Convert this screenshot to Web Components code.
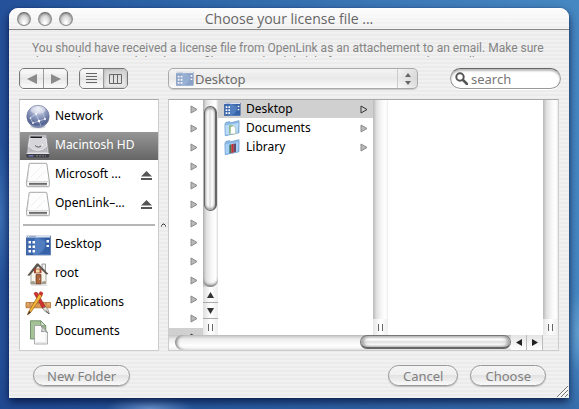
<!DOCTYPE html>
<html lang="en">
<head>
<meta charset="utf-8">
<title>Choose your license file ...</title>
<style>
html { height: 100%; }
body {
  margin: 0; min-height: 100%; display: flex; flex-direction: column; box-sizing: border-box;
  padding: 8px 10px 12px 9px; overflow: hidden;
  font: 12px/16px "Noto Sans", "Open Sans", sans-serif; color: #000;
  background:
    radial-gradient(ellipse 44px 14px at 150px 100%, rgba(120,160,215,.8), transparent),
    radial-gradient(ellipse 14px 70px at 0 215px, rgba(70,125,190,.7), transparent),
    radial-gradient(ellipse 14px 40px at 100% 332px, rgba(110,170,215,.7), transparent),
    linear-gradient(transparent 85%, rgba(25,60,130,.35)),
    linear-gradient(90deg, #24519a 0%, #2d65a8 30%, #3a74b4 60%, #4688c2 100%);
}
</style>
</head>
<body>
<mac-window heading="Choose your license file ...">
  <p slot="message">You should have received a license file from OpenLink as an attachement to an email. Make sure that you have saved this license file to your hard disk before you continue the installation.</p>
  <mac-toolbar slot="toolbar"></mac-toolbar>
  <mac-sidebar slot="main">
    <sidebar-item icon="network">Network</sidebar-item>
    <sidebar-item icon="drive" selected>Macintosh HD</sidebar-item>
    <sidebar-item icon="volume" eject>Microsoft ...</sidebar-item>
    <sidebar-item icon="volume" eject>OpenLink–...</sidebar-item>
    <hr>
    <sidebar-item icon="desktop">Desktop</sidebar-item>
    <sidebar-item icon="home">root</sidebar-item>
    <sidebar-item icon="apps">Applications</sidebar-item>
    <sidebar-item icon="docs">Documents</sidebar-item>
  </mac-sidebar>
  <mac-splitter slot="main"></mac-splitter>
  <column-browser slot="main">
    <browser-row icon="desktop" selected>Desktop</browser-row>
    <browser-row icon="folderdoc">Documents</browser-row>
    <browser-row icon="folderlib">Library</browser-row>
  </column-browser>
  <mac-button slot="start" wide>New Folder</mac-button>
  <mac-button slot="end">Cancel</mac-button>
  <mac-button slot="end">Choose</mac-button>
</mac-window>

<script>
const define = (name, html, setup) => {
  const template = document.createElement('template');
  template.innerHTML = html;
  customElements.define(name, class extends HTMLElement {
    constructor() {
      super();
      this.attachShadow({ mode: 'open' }).append(template.content.cloneNode(true));
    }
    connectedCallback() { if (setup) setup(this, this.shadowRoot); }
  });
};

const ICONS = {
  network: `<svg viewBox="0 0 24 24"><defs><radialGradient id="g" cx=".5" cy=".15" r=".9"><stop offset="0" stop-color="#e4e9f5"/><stop offset=".45" stop-color="#8c99bd"/><stop offset=".8" stop-color="#53618f"/><stop offset="1" stop-color="#a9b8dc"/></radialGradient></defs><ellipse cx="12" cy="22" rx="8" ry="1.6" fill="#ddd"/><circle cx="12" cy="11.5" r="11.2" fill="url(#g)" stroke="#6b7698" stroke-width=".6"/><path d="M4 13l6-4 5-5M10 9l3 7 6-2M13 16l-6 2M15 4l4 10M13 16l2 5M4 13l3 5" fill="none" stroke="#d5e0f8" stroke-width=".7" opacity=".8"/><g fill="#fff"><circle cx="10" cy="9" r="1"/><circle cx="13" cy="16" r="1.2"/><circle cx="19" cy="14" r="1"/><circle cx="7" cy="18" r=".9"/><circle cx="4.500" cy="13" r=".8"/></g><ellipse cx="12" cy="5" rx="7.500" ry="3.800" fill="#fff" opacity=".42"/></svg>`,
  drive: `<svg viewBox="0 0 24 24"><path d="M3 .8h17.500L23 20H.8z" fill="#cfcfd4" stroke="#8a8a8e" stroke-width=".8"/><path d="M4 1.500h15.500L21.500 18H2.500z" fill="#b9b9bf"/><path d="M3.500 5Q12 .5 20 5l1 7q-9 9-18.500 0z" fill="#d5d5da" stroke="#f1f1f1" stroke-width=".7"/><path d="M4.500 2.500h11.500v1.500H4.500z" fill="#1b1b1f"/><path d="M9 11.500q3.500 3.200 6.500 0" fill="none" stroke="#555"/><path d="M15.500 12l1.500-2" stroke="#fff"/><path d="M.5 20h22.700v2.500q0 1-1.500 1H2q-1.500 0-1.500-1z" fill="#3c3c46"/><path d="M.7 19.500h22.400" stroke="#eee" stroke-width=".8"/><path d="M2.500 21.800h5" stroke="#7b82c4" stroke-width="1.300"/><path d="M10 21.800h10" stroke="#8a8a8a" stroke-dasharray="2 1"/></svg>`,
  volume: `<svg viewBox="0 0 24 24"><path d="M3.200.8q.2-.5.800-.5h16q.6 0 .8.500L23.300 18v5q0 .7-.8.700h-21q-.8 0-.8-.7v-5z" fill="#fdfdfd" stroke="#9b9b9b" stroke-width=".9"/><path d="M1 18.500h22M3 1.500L1.500 18" stroke="#ccc" stroke-width=".7"/><path d="M5 14l12-12M10 17l9-9" stroke="#f0f0f0"/><rect x="3" y="20" width="18" height="2.300" fill="#858585"/><path d="M3 20.300h18" stroke="#555" stroke-width=".7"/></svg>`,
  desktop: `<svg viewBox="0 0 24 24"><rect x=".3" y="3" width="24" height="19" fill="#3d68ad" stroke="#2b4e8c" stroke-width=".6"/><path d="M9 3L7 22h17L20 9z" fill="#5b87c6" opacity=".7"/><path d="M12 21q9-3 7-17h5v17z" fill="#2f5ba2" opacity=".8"/><rect x="0" y="2.300" width="24" height="2.200" fill="#dfe5ef"/><path d="M1 3.400h1M3 3.400h7" stroke="#8796b3" stroke-width=".8"/><g fill="#fff"><path d="M2.500 8h2.500v2.500H2.500zM6.500 8H9v2.500H6.500zM2.500 12.500h2.500V15H2.500zM6.500 12.500H9V15H6.500zM2.500 17h2.500v2.500H2.500zM6.500 17H9v2.500H6.500zM20.500 7H23v2.500h-2.500zM20.500 12H23v2h-2.500z"/></g></svg>`,
  home: `<svg viewBox="0 0 24 24"><path d="M5 22.500h15l2 1H5z" fill="#ccc"/><path d="M16 2h3.500v7L16 6z" fill="#eee" stroke="#777" stroke-width=".7"/><path d="M5 10l6.500-8L20 11v10.500L5 22z" fill="#f8f5ec" stroke="#777" stroke-width=".6"/><path d="M1.300 13.500L10.500 1.800q1-1 2 0L22.500 12l-2.200.4L12 4.200 3.500 13.800z" fill="#5d564d"/><path d="M10 12.500h5v9.300h-5z" fill="#ac653a" stroke="#66371f" stroke-width=".7"/><path d="M9.500 7h4.500v4H9.500z" fill="#f4dca6" stroke="#8a2515" stroke-width=".7"/><path d="M8.700 6.700v4.600M14.800 6.700v4.600" stroke="#a3301e" stroke-width="1.200"/><path d="M4.500 20q2.500-2 4.500 0v2H4.500zM16 20q2-2 4 0v2h-4z" fill="#a39e90"/><circle cx="13.700" cy="17" r=".6" fill="#fff"/></svg>`,
  apps: `<svg viewBox="0 0 24 24"><path d="M0 11.500h24.500v5.300H0z" fill="#d99a57" stroke="#a76427" stroke-width=".7"/><path d="M1 13h23" stroke="#f1c084"/><path d="M4 11.700v2m4-2v2m4-2v2m4-2v2m4-2v2" stroke="#7d4a1c" stroke-width=".7"/><path d="M8 2.500q1-2.200 3.300-.8L19.500 16l-2.800 1.600z" fill="#cf3430" stroke="#8c1b1b" stroke-width=".6"/><path d="M16.700 17.300l2.900-1.600q3 2.500 3.700 7-4.800-1.500-6.600-5.400z" fill="#e4e0d8" stroke="#777" stroke-width=".7"/><path d="M20 19.500l3 3.500" stroke="#555"/><path d="M13.500 2.500L3 20l-1.600 3.800L4.500 21.700 16.200 4.500z" fill="#f6b83b" stroke="#9a5a13" stroke-width=".7"/><path d="M12.500 2.800L14 .6q2.500-.3 3.200 2L15.800 5z" fill="#c9332d"/><path d="M1.300 24l2-4 1.600 1.200z" fill="#333"/></svg>`,
  docs: `<svg viewBox="0 0 24 24"><path d="M4.500.8h10.300l5 5V19H4.500z" fill="#a3c397" stroke="#5f7d58" stroke-width=".8"/><path d="M14.800.8l5 5h-5z" fill="#d9e8d1" stroke="#5f7d58" stroke-width=".7"/><path d="M8.500 5.500h6.800l6.200 7V24h-13z" fill="#fbfbfb" stroke="#999" stroke-width=".8"/><path d="M15.300 5.500l6.200 7q-3.500-2-6-.8 1.500-3-.2-6.200z" fill="#ddd" stroke="#777" stroke-width=".7"/><path d="M10 22.500h10V14" stroke="#e5e5e5" fill="none"/></svg>`,
  folderdoc: `<svg viewBox="0 0 24 24"><path d="M1.500 6L3 3.500l6-1L10.500 4 22.500 1v18L2 23.500z" fill="#8bbbe8" stroke="#6293c5"/><path d="M1.500 7.500L20.500 4l2 .3L21 19.500 2 23z" fill="#b9dafa" stroke="#78a8d6" stroke-width=".8"/><path d="M8.500 8.500h6l3 3.500v9H8.500z" fill="#fff" stroke="#9ab596"/><path d="M9 20V9h4" fill="none" stroke="#76ab65" stroke-width="1.700"/></svg>`,
  folderlib: `<svg viewBox="0 0 24 24"><path d="M1.500 6L3 3.500l6-1L10.500 4 22.500 1v18L2 23.500z" fill="#8bbbe8" stroke="#6293c5"/><path d="M1.500 7.500L20.500 4l2 .3L21 19.500 2 23z" fill="#a6cff7" stroke="#78a8d6" stroke-width=".8"/><path d="M8 8.500l3-.5v13l-3 .5z" fill="#3e7a59"/><path d="M11 8l3.500-.7v13L11 21z" fill="#d02c2c"/><path d="M14.500 7.300L18 6.600V19l-3.500 1.300z" fill="#634a68"/></svg>`
};

define('mac-icon', `<style>
:host { display: block; flex: none; width: var(--icon, 24px); height: var(--icon, 24px); }
svg { display: block; width: 100%; height: 100%; overflow: visible; }
</style><span></span>`, (el, root) => {
  root.querySelector('span').innerHTML = ICONS[el.getAttribute('name')] || '';
});

define('mac-window', `<style>
:host { flex: 1; display: flex; flex-direction: column; position: relative; border-radius: 9px 9px 0 0;
  background: repeating-linear-gradient(#f1f1f1 0 2px, #ebebeb 2px 4px);
  box-shadow: 0 0 1px rgba(0,10,40,.7), 0 4px 8px rgba(0,10,50,.75); }
header { display: grid; grid-template-columns: 1fr auto 1fr; align-items: center; height: 21px;
  padding: 0 8px; border-bottom: 1px solid #888; border-radius: 9px 9px 0 0;
  background: linear-gradient(rgba(255,255,255,.9), rgba(255,255,255,.1)); }
.lights { display: flex; gap: 7px; }
.lights button { width: 14px; height: 14px; padding: 0; border: 1px solid #8b8b8b; border-top-color: #666; border-radius: 50%;
  background: radial-gradient(ellipse at 50% 90%, #fff 10%, #d9d9d9 50%, #aaa 90%); box-shadow: inset 0 1px 2px #888; }
h1 { margin: 0; font: 14px/20px "Open Sans", sans-serif; color: #666; }
.message { margin: 11px 0 0 23px; height: 16px; overflow: hidden; width: calc(100% - 43px); }
::slotted(p) { margin: 0; font: 12px/14px Roboto, sans-serif; color: #848484; }
.toolbar { padding: 11px 8px 0 10px; }
main { flex: 1; display: flex; min-height: 0; padding: 10px 10px 0; }
footer { display: flex; justify-content: space-between; padding: 14px 23px 12px 24px; }
footer div { display: flex; gap: 12px; }
.grip { position: absolute; right: 1px; bottom: 1px; width: 11px; height: 11px; }
</style>
<header><div class="lights"><button aria-label="Close"></button><button aria-label="Minimize"></button><button aria-label="Zoom"></button></div><h1></h1><span></span></header>
<div class="message"><slot name="message"></slot></div>
<div class="toolbar"><slot name="toolbar"></slot></div>
<main><slot name="main"></slot></main>
<footer><div><slot name="start"></slot></div><div><slot name="end"></slot></div></footer>
<svg class="grip" viewBox="0 0 11 11"><path d="M0 11L11 0M4 11l7-7M8 11l3-3" stroke="#777"/><path d="M1.500 11L11 1.500M5.500 11L11 5.500" stroke="#fff"/></svg>`,
(el, root) => { root.querySelector('h1').textContent = el.getAttribute('heading'); });

define('mac-toolbar', `<style>
:host { display: flex; align-items: center; height: 21px; }
.seg { display: flex; box-sizing: border-box; width: 49px; height: 21px; border: 1px solid #777; border-radius: 5px; overflow: hidden;
  box-shadow: inset 0 0 2px #999, 0 1px 0 #fff; margin-right: 11px; }
.seg button { flex: 1; padding: 0; border: 0; display: grid; place-items: center;
  background: linear-gradient(rgba(255,255,255,.8), rgba(225,225,225,.5) 50%, rgba(255,255,255,.8)); }
.seg button + button { border-left: 1px solid #999; }
.seg .on { background: linear-gradient(#d0d0d0, #e0e0e0 50%, #eee); box-shadow: inset 0 0 3px #aaa; }
svg { display: block; }
.popup { display: grid; align-items: center; flex: 0 1 250px; margin: 0 32px 0 29px; height: 21px; }
.popup > * { grid-area: 1 / 1; }
.popup mac-icon { --icon: 17px; margin-left: 8px; opacity: .55; pointer-events: none; }
select { appearance: none; box-sizing: border-box; width: 100%; height: 21px; padding: 0 24px 0 26px; border: 1px solid #aaa; border-radius: 5px;
  font: 13px/18px "Noto Sans", sans-serif; color: #6b6b6b; background: linear-gradient(#f4f4f4, #e9e9e9 50%, #fbfbfb); box-shadow: 0 1px 0 #ccc; }
.step { justify-self: end; box-sizing: border-box; width: 20px; height: 19px; margin-right: 1px; border-left: 1px solid #ccc; pointer-events: none; display: grid; place-items: center;
  background: linear-gradient(90deg, transparent, rgba(190,190,190,.4)); }
label { flex: 1; display: flex; align-items: center; box-sizing: border-box; min-width: 0; height: 21px; padding: 0 8px 0 4px; gap: 3px;
  background: #fff; border: 1px solid #999; border-top-color: #666; border-radius: 11px; box-shadow: inset 0 2px 2px #bbb, 0 1px 0 #fff; }
input { flex: 1; min-width: 0; padding: 0; border: 0; outline: 0; background: none; font: 13px/18px "Noto Sans", sans-serif; color: #777; }
input::placeholder { color: #777; opacity: 1; }
</style>
<div class="seg"><button aria-label="Back"><svg width="10" height="10"><path d="M10 0v10L0 5z" fill="#8a8a8a"/></svg></button><button aria-label="Forward"><svg width="10" height="10"><path d="M0 0v10l10-5z" fill="#8a8a8a"/></svg></button></div>
<div class="seg"><button aria-label="List view"><svg width="11" height="11"><path d="M0 .5h11M0 3.500h11M0 6.500h11M0 9.500h11" stroke="#666"/></svg></button><button class="on" aria-label="Column view"><svg width="13" height="10"><path d="M.5.5h12v9H.5zM4.500.5v9M8.500.5v9" fill="none" stroke="#666"/></svg></button></div>
<div class="popup"><select aria-label="Location"><option>Desktop</option></select><mac-icon name="desktop"></mac-icon>
<span class="step"><svg width="6" height="12"><path d="M3 0l3 4H0zM3 12l3-4H0z" fill="#666"/></svg></span></div>
<label><svg width="13" height="13"><circle cx="5" cy="5" r="3.700" fill="none" stroke="#555" stroke-width="2"/><path d="M8 8l4 4" stroke="#555" stroke-width="2.500" stroke-linecap="round"/></svg><input type="search" placeholder="search" aria-label="search"></label>`);

define('mac-sidebar', `<style>
:host { display: flex; flex-direction: column; box-sizing: border-box; flex: none; width: 140px; gap: 1px; padding: 3px 0 4px; background: #fff; border: 1px solid #ccc; border-top-color: #aaa; }
::slotted(hr) { width: calc(100% - 6px); margin: 5px 3px 4px; border: 0; height: 2px; background: #b5b5b5; box-sizing: border-box; }
</style><slot></slot>`);

define('sidebar-item', `<style>
:host { display: block; }
button { all: unset; box-sizing: border-box; display: flex; align-items: center; gap: 5px; width: 100%; height: 28px; padding: 0 6px; cursor: default; }
:host([selected]) button { color: #fff; background: linear-gradient(#969696, #666); }
.eject { display: none; margin-left: auto; }
:host([eject]) .eject { display: block; }
span { padding-bottom: 2px; white-space: nowrap; }
</style><button><mac-icon></mac-icon><span><slot></slot></span><svg class="eject" width="11" height="9"><path d="M5.500 0L11 5.500H0zM0 7h11v2H0z" fill="#555"/></svg></button>`,
(el, root) => {
  const icon = document.createElement('mac-icon');
  icon.setAttribute('name', el.getAttribute('icon'));
  root.querySelector('mac-icon').replaceWith(icon);
});

define('mac-splitter', `<style>
:host { display: grid; place-items: center; flex: none; width: 9px; }
</style><svg width="5" height="4"><path d="M.5 3.500V2.500L2 1h1l1.500 1.500v1" fill="none" stroke="#333"/></svg>`);

define('column-bar', `<style>
:host { display: flex; flex-direction: column; width: 15px; flex: none; box-sizing: border-box;
  background: linear-gradient(90deg, #b9b9b9, #e2e2e2 25%, #f8f8f8 60%, #fff 85%, #ececec); }
.track { flex: 1; display: flex; flex-direction: column; min-height: 0; }
.foot { height: 16px; display: grid; place-items: center; background: linear-gradient(90deg, #e6e6e6, #fff 50%, #eee); }
.thumb, .arrow { display: none; }
:host([scroll]) .thumb { display: block; box-sizing: border-box; height: 56%; margin: 6px 1px 0; border: 1px solid #666; border-width: 1px 2px 1px 1px; border-radius: 7px;
  background: linear-gradient(90deg, #ccc, #fff 30%, #dcdcdc 50%, #fff 70%, #ddd); box-shadow: inset 0 2px 2px #aaa, inset 0 -2px 2px #aaa; }
:host([scroll]) .track { border-radius: 0 0 7px 7px; box-shadow: inset 0 -3px 3px -1px #777; }
:host([scroll]) .arrow { display: grid; place-items: center; height: 15px; border-bottom: 1px solid #aaa; background: linear-gradient(90deg, #ddd, #fff 50%, #eee); }
button { all: unset; }
</style><div class="track"><div class="thumb"></div></div>
<button class="arrow" aria-label="Scroll up"><svg width="7" height="6"><path d="M3.500 0L7 6H0z" fill="#333"/></svg></button>
<button class="arrow" aria-label="Scroll down"><svg width="7" height="6"><path d="M3.500 6L7 0H0z" fill="#333"/></svg></button>
<div class="foot"><svg width="5" height="7"><path d="M.5 0v7M4.500 0v7" stroke="#666"/></svg></div>`);

define('browser-row', `<style>
:host { display: block; margin-bottom: 1px; }
button { all: unset; box-sizing: border-box; display: flex; align-items: center; gap: 6px; width: 100%; height: 18px; padding: 0 5px 0 6px; --icon: 16px; cursor: default; }
:host([selected]) button { background: #d0d0d0; }
svg { margin-left: auto; flex: none; }
path { fill: #b9b9b9; stroke: #8a8a8a; }
:host([selected]) path { fill: none; stroke: #333; }
</style><button><mac-icon></mac-icon><slot></slot><svg width="8" height="9"><path d="M1 1v7l6-3.500z"/></svg></button>`,
(el, root) => {
  const old = root.querySelector('mac-icon');
  if (!el.hasAttribute('icon')) return old.remove();
  const icon = document.createElement('mac-icon');
  icon.setAttribute('name', el.getAttribute('icon'));
  old.replaceWith(icon);
});

define('column-browser', `<style>
:host { flex: 1; min-width: 0; display: flex; flex-direction: column; box-sizing: border-box; border: 1px solid #ccc; border-top-color: #aaa; }
.cols { flex: 1 1 0; min-height: 0; display: flex; background: #fff; }
.col { flex: 1; min-width: 0; overflow: hidden; }
.parent { flex: 0 0 34px; overflow: hidden; height: 0; min-height: 100%; }
.hbar { display: flex; height: 15px; margin-right: 15px; background: linear-gradient(#c4c4c4, #eee 30%, #fff 70%, #eee); box-sizing: border-box; }
.track { flex: 1; display: flex; justify-content: flex-end; margin-left: 6px; border-radius: 8px 0 0 8px; box-shadow: inset 3px 0 3px -1px #888; }
.thumb { flex: none; box-sizing: border-box; width: 45%; height: 14px; border: 1px solid #777; border-bottom: 2px solid #666; border-radius: 7px;
  background: linear-gradient(#ccc, #fff 30%, #dedede 55%, #fff 80%, #ddd); box-shadow: inset 3px 0 3px #aaa, inset -3px 0 3px #aaa; }
.hbar button { all: unset; display: grid; place-items: center; width: 15px; background: linear-gradient(#e4e4e4, #fff); border-right: 1px solid #bbb; }
</style>
<div class="cols">
  <div class="col parent"></div><column-bar scroll></column-bar>
  <div class="col"><slot></slot></div><column-bar></column-bar>
  <div class="col"></div><column-bar></column-bar>
</div>
<div class="hbar"><div class="track"><div class="thumb"></div></div>
<button aria-label="Scroll left"><svg width="6" height="7"><path d="M6 0v7L0 3.500z" fill="#222"/></svg></button><button aria-label="Scroll right"><svg width="6" height="7"><path d="M0 0v7l6-3.500z" fill="#222"/></svg></button></div>`,
(el, root) => {
  const parent = root.querySelector('.parent');
  for (let i = 0; i < 13; i++) {
    const row = document.createElement('browser-row');
    if (i === 12) row.setAttribute('selected', '');
    parent.append(row);
  }
});

define('mac-button', `<style>
:host { display: block; }
button { box-sizing: border-box; height: 21px; padding: 0 14px; border: 1px solid #999; border-radius: 11px; white-space: nowrap;
  font: 13px/18px "Noto Sans", sans-serif; color: #808080;
  background: linear-gradient(#f4f4f4, #f0f0f0 45%, #e2e2e2 50%, #fafafa); box-shadow: 0 1px 1px #bbb; }
:host([wide]) button { padding: 0 13px; }
</style><button><slot></slot></button>`);
</script>
</body>
</html>
